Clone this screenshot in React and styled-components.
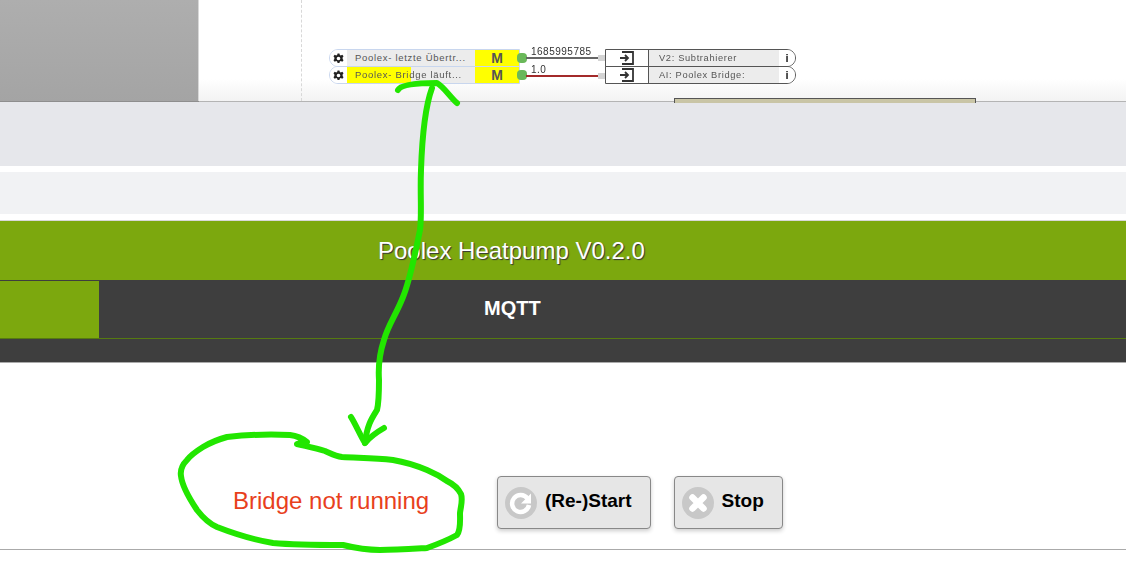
import React from 'react';
import styled, { createGlobalStyle } from 'styled-components';

const Pure = () => (
  <Page>
    <GlobalStyle />
    <Canvas>
      <SidePane />
      <Ruler />
      <Sources>
        <SourceRow>
          <Gear><GearIcon /></Gear>
          <SourceName>Poolex- letzte Übertr...</SourceName>
          <Marker>M</Marker>
          <Port />
        </SourceRow>
        <SourceRow>
          <Gear><GearIcon /></Gear>
          <SourceName $active>Poolex- Bridge läuft...</SourceName>
          <Marker>M</Marker>
          <Port />
        </SourceRow>
      </Sources>
      <Wire $top={57}><WireValue>1685995785</WireValue></Wire>
      <Wire $top={75} $red><WireValue>1.0</WireValue></Wire>
      <Targets>
        <TargetRow>
          <TargetIcon><EntryIcon /></TargetIcon>
          <TargetName>V2: Subtrahierer</TargetName>
          <Info>i</Info>
        </TargetRow>
        <TargetRow>
          <TargetIcon><EntryIcon /></TargetIcon>
          <TargetName>AI: Poolex Bridge:</TargetName>
          <Info>i</Info>
        </TargetRow>
      </Targets>
      <Cartouche />
    </Canvas>
    <GreyBand />
    <LightBand />
    <Header>Poolex Heatpump V0.2.0</Header>
    <Nav>
      <NavActive />
      <NavLabel>MQTT</NavLabel>
    </Nav>
    <NavFooter />
    <Status>
      <StatusText>Bridge not running</StatusText>
      <ActionButton>
        <ButtonIcon><RestartIcon /></ButtonIcon>
        <ButtonLabel>(Re-)Start</ButtonLabel>
      </ActionButton>
      <ActionButton>
        <ButtonIcon><StopIcon /></ButtonIcon>
        <ButtonLabel>Stop</ButtonLabel>
      </ActionButton>
    </Status>
    <Annotation />
  </Page>
)

const GearIcon = () => (
  <svg width='11' height='11' viewBox='0 0 24 24'>
    <path fill='#222' fillRule='evenodd' d='M10 1h4l1 3.5 2 1 3.300-1.500 2.700 3-2 3v3l2 3-2.700 3-3.300-1.500-2 1-1 3.500h-4l-1-3.500-2-1-3.300 1.500-2.700-3 2-3v-3l-2-3 2.700-3 3.300 1.500 2-1zM12 8a4 4 0 1 0 0 8 4 4 0 0 0 0-8z' />
  </svg>
)

const EntryIcon = () => (
  <svg width='16' height='14' viewBox='0 0 16 14'>
    <path fill='none' stroke='#333' strokeWidth='1.800' d='M3 1h11v12H3M1 7h8M6 4l3 3-3 3' />
  </svg>
)

const RestartIcon = () => (
  <svg width='32' height='32' viewBox='0 0 32 32'>
    <circle cx='16' cy='16' r='16' fill='#c8c8c8' />
    <path fill='none' stroke='#fff' strokeWidth='4.500' d='M22.500 11.500a8.500 8.500 0 1 0 1.500 6.500' />
    <path fill='#fff' d='M26 6.500v10h-10z' />
  </svg>
)

const StopIcon = () => (
  <svg width='32' height='32' viewBox='0 0 32 32'>
    <circle cx='16' cy='16' r='16' fill='#c8c8c8' />
    <path stroke='#fff' strokeWidth='6.500' strokeLinecap='round' d='M10.500 10.500l11 11M21.500 10.500l-11 11' />
  </svg>
)

const Annotation = () => (
  <Scribble viewBox='0 0 1126 573'>
    <path d='M398 90C401 84 420 83 437 83C444 87 450 97 457 103' />
    <path d='M432 88C424 110 422 140 421 170C420 195 422 215 420 230C415 255 410 280 403 297C396 315 388 325 384 340C380 352 378 365 379 380C379 392 379 402 377 410C372 418 367 425 365 443' />
    <path d='M351 417C356 425 360 435 365 443C370 437 377 432 384 428' />
    <path d='M297 444C300 443 304 443 307 442C302 438 298 436 290 435C270 434 245 435 227 437C216 440 208 444 203 447C195 452 190 456 187 460C182 465 180 470 181 476C182 485 187 495 197 510C204 519 210 524 217 527C235 534 255 540 273 543C295 545 320 545 343 545C355 548 365 550 380 550C395 550 410 549 427 548C438 544 448 540 457 535C461 530 460 520 460 513C461 505 463 500 461 494C458 488 453 484 447 481C440 476 434 473 427 470C415 465 405 462 393 460C375 458 360 458 342 457C335 456 330 453 325 451C315 448 305 446 297 444Z' />
  </Scribble>
)

const GlobalStyle = createGlobalStyle`
  html, body {
    margin: 0;
    padding: 0;
    background: #fff;
    overflow: hidden;
  }
  body {
    font-family: "Liberation Sans", Arial, sans-serif;
  }
`

const Page = styled.div`
  position: relative;
  width: 1126px;
  height: 573px;
  overflow: hidden;
  background: #fff;
`

const Canvas = styled.div`
  position: relative;
  height: 101px;
  background: linear-gradient(#fff 78%, #f3f3f3);
  border-bottom: 1px solid #b4b4b4;
`

const SidePane = styled.div`
  width: 199px;
  height: 100%;
  box-sizing: border-box;
  background: linear-gradient(#aeaeae, #a4a4a4);
  border-right: 1px solid #d8d8d8;
  box-shadow: 0 1px 0 #8e8e8e;
`

const Ruler = styled.div`
  position: absolute;
  left: 301px;
  top: 0;
  bottom: 0;
  border-left: 1px dashed #d8d8d8;
`

const Sources = styled.div`
  position: absolute;
  left: 329px;
  top: 49px;
  display: flex;
  flex-direction: column;
  gap: 0;
  filter: blur(0.5px);
`

const SourceRow = styled.div`
  position: relative;
  display: flex;
  width: 191px;
  height: 18px;
  margin-bottom: -1px;
  box-sizing: border-box;
  border: 1px solid #c8d6ee;
  border-radius: 9px 0 0 9px;
`

const Gear = styled.div`
  width: 17px;
  display: flex;
  align-items: center;
  justify-content: center;
  background: #fff;
  border-radius: 9px 0 0 9px;
`

const SourceName = styled.div`
  width: 128px;
  padding-left: 8px;
  box-sizing: border-box;
  font-size: 9.500px;
  line-height: 16px;
  letter-spacing: 0.700px;
  color: #555;
  white-space: nowrap;
  overflow: hidden;
  background: ${p => p.$active ? 'linear-gradient(90deg, #ffff00 50%, #ececec 50%)' : '#ececec'};
`

const Marker = styled.div`
  width: 44px;
  background: #ffff00;
  text-align: center;
  font-size: 14px;
  font-weight: bold;
  line-height: 17px;
  color: #555;
`

const Port = styled.div`
  position: absolute;
  right: -8px;
  top: 3px;
  width: 10px;
  height: 10px;
  border-radius: 4px;
  background: #6ab85a;
`

const Wire = styled.div`
  position: absolute;
  left: 526px;
  top: ${p => p.$top}px;
  width: 72px;
  height: 2px;
  background: ${p => p.$red ? '#a32a2a' : '#666'};
  &::after {
    content: '';
    position: absolute;
    right: -7px;
    top: -2px;
    width: 7px;
    height: 6px;
    background: #d4d4d4;
  }
`

const WireValue = styled.span`
  position: absolute;
  left: 5px;
  bottom: 1px;
  font-size: 10px;
  line-height: 12px;
  letter-spacing: 0.500px;
  color: #333;
  white-space: nowrap;
`

const Targets = styled.div`
  position: absolute;
  left: 605px;
  top: 49px;
  display: flex;
  flex-direction: column;
  filter: blur(0.5px);
`

const TargetRow = styled.div`
  display: flex;
  width: 191px;
  height: 18px;
  box-sizing: border-box;
  border: 1px solid #555;
  border-radius: 0 9px 9px 0;
  margin-bottom: -1px;
  overflow: hidden;
`

const TargetIcon = styled.div`
  width: 43px;
  display: flex;
  align-items: center;
  justify-content: center;
  background: #fff;
  border-right: 1px solid #555;
  box-sizing: border-box;
`

const TargetName = styled.div`
  flex: 1;
  padding-left: 10px;
  background: #ececec;
  font-size: 9.300px;
  line-height: 16px;
  letter-spacing: 0.650px;
  color: #555;
  white-space: nowrap;
`

const Info = styled.div`
  width: 16px;
  background: #fff;
  text-align: center;
  font-size: 11px;
  font-weight: bold;
  line-height: 16px;
  color: #222;
`

const Cartouche = styled.div`
  position: absolute;
  left: 674px;
  top: 98px;
  width: 302px;
  height: 5px;
  box-sizing: border-box;
  background: #c9c5a6;
  border: 1px solid #555;
  border-bottom: 0;
`

const GreyBand = styled.div`
  height: 64px;
  background: #e6e7eb;
`

const LightBand = styled.div`
  height: 42px;
  margin: 6px 0;
  background: #f1f2f4;
`

const Header = styled.div`
  height: 59px;
  padding-left: 378px;
  border-top: 1px solid #d8d8d8;
  background: #7ca80e;
  font-size: 24px;
  line-height: 59px;
  color: #fff;
  text-shadow: 1px 1px 1px #333;
`

const Nav = styled.div`
  display: flex;
  height: 59px;
  padding-top: 1px;
  box-sizing: border-box;
  background: #3e3e3e;
  border-bottom: 1px solid #567a10;
`

const NavActive = styled.div`
  width: 99px;
  background: #7ca80e;
`

const NavLabel = styled.div`
  padding-left: 385px;
  font-size: 20px;
  font-weight: bold;
  line-height: 54px;
  color: #fff;
`

const NavFooter = styled.div`
  height: 23px;
  background: #3e3e3e;
  border-bottom: 1px solid #aaa;
`

const Status = styled.div`
  display: flex;
  align-items: center;
  gap: 23px;
  height: 187px;
  padding: 93px 0 0 233px;
  box-sizing: border-box;
  border-bottom: 1px solid #aaa;
`

const StatusText = styled.div`
  width: 241px;
  padding-bottom: 3px;
  font-size: 24px;
  color: #e8401c;
`

const ActionButton = styled.div`
  display: flex;
  align-items: center;
  gap: 8px;
  height: 53px;
  padding: 0 18px 0 7px;
  box-sizing: border-box;
  background: #e6e6e6;
  border: 1px solid #888;
  border-radius: 4px;
  box-shadow: 0 2px 4px rgba(0, 0, 0, 0.2);
  font-size: 19px;
  font-weight: bold;
  color: #000;
`

const ButtonLabel = styled.span`
  padding-bottom: 3px;
`

const ButtonIcon = styled.span`
  display: flex;
`

const Scribble = styled.svg`
  position: absolute;
  left: 0;
  top: 0;
  width: 1126px;
  height: 573px;
  pointer-events: none;
  path {
    fill: none;
    stroke: #22e600;
    stroke-width: 6;
    stroke-linecap: round;
    stroke-linejoin: round;
  }
`

export default Pure
